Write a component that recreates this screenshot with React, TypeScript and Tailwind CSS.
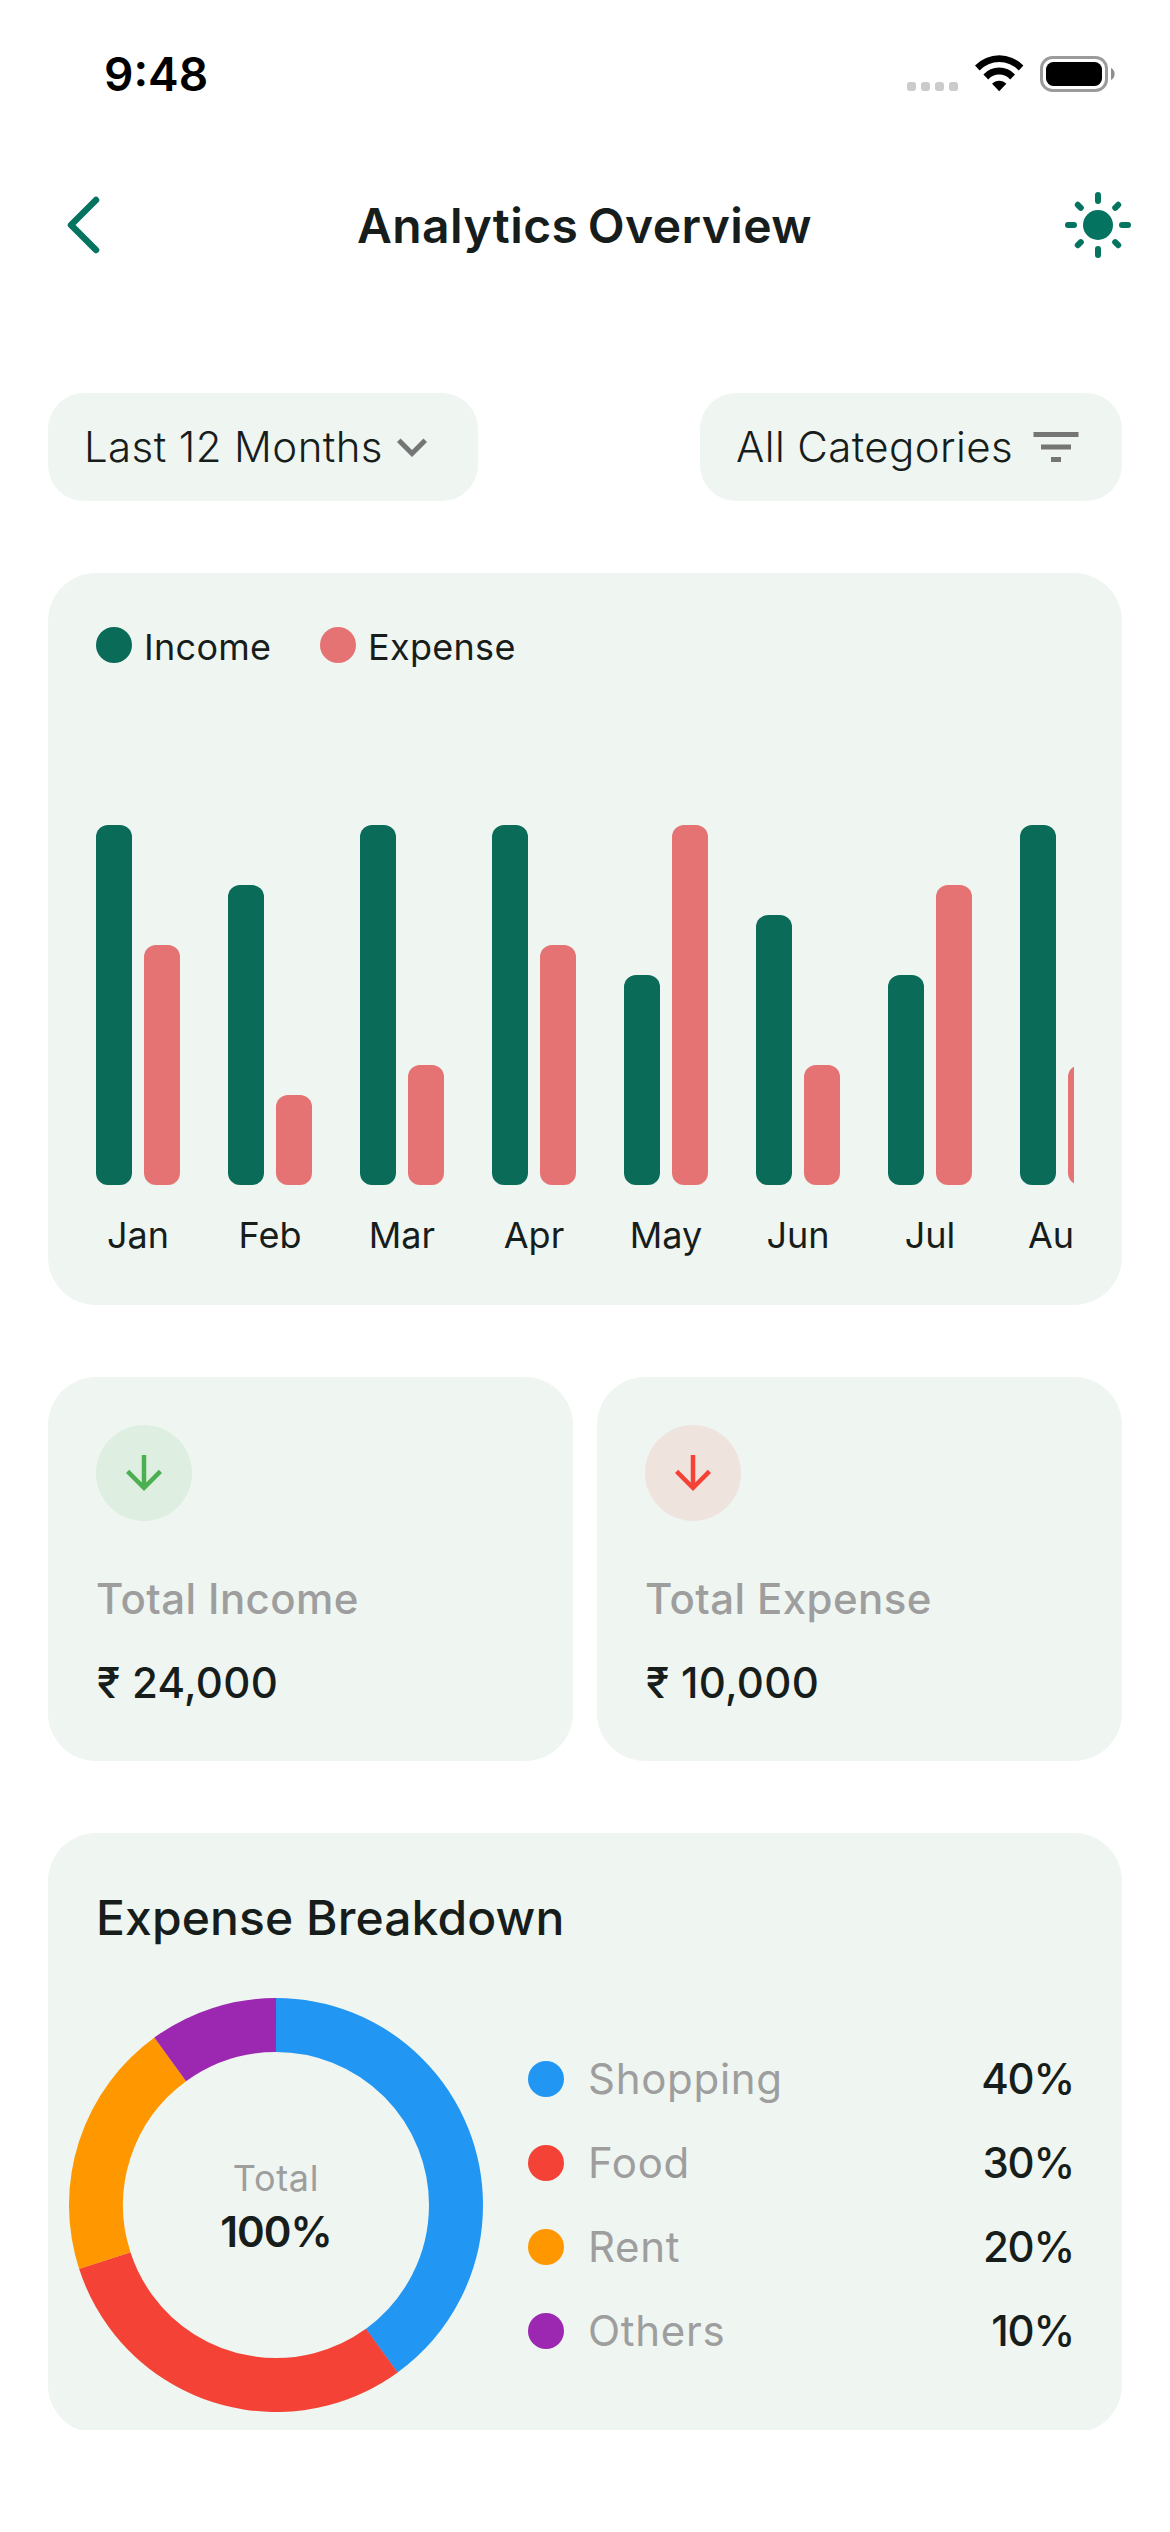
import { MdArrowDownward, MdFilterList, MdKeyboardArrowDown } from 'react-icons/md'

interface MonthData {
  label: string
  income: number
  expense: number
}

interface Category {
  name: string
  percent: number
  color: string
}

const months: MonthData[] = [
  { label: 'Jan', income: 360, expense: 240 },
  { label: 'Feb', income: 300, expense: 90 },
  { label: 'Mar', income: 360, expense: 120 },
  { label: 'Apr', income: 360, expense: 240 },
  { label: 'May', income: 210, expense: 360 },
  { label: 'Jun', income: 270, expense: 120 },
  { label: 'Jul', income: 210, expense: 300 },
  { label: 'Aug', income: 360, expense: 120 },
]

const categories: Category[] = [
  { name: 'Shopping', percent: 40, color: '#2196f3' },
  { name: 'Food', percent: 30, color: '#f44336' },
  { name: 'Rent', percent: 20, color: '#ff9800' },
  { name: 'Others', percent: 10, color: '#9c27b0' },
]

function StatusBar() {
  return (
    <div className="h-[141px] flex items-start justify-between pl-[104px] pr-[54px]">
      <span className="pt-[46px] text-[46px] leading-[56px] font-semibold text-black">9:48</span>
      <div className="flex items-start pt-[55px]">
        <div className="flex gap-[5px] pt-[27px]">
          {[0, 1, 2, 3].map((i) => (
            <span key={i} className="w-[9px] h-[9px] rounded-[3px] bg-[#cbcbcb]" />
          ))}
        </div>
        <svg className="ml-[17px]" width="49" height="37" viewBox="0 0 49 37">
          <path d="M0 10.5 A33.9 33.9 0 0 1 48.4 10.5 L43.8 15.5 A26.8 26.8 0 0 0 4.6 15.5 Z" />
          <path d="M8.4 19.4 A21.5 21.5 0 0 1 40 19.4 L35.2 24.4 A14.8 14.8 0 0 0 13.2 24.4 Z" />
          <path d="M17.1 28.8 A9.7 9.7 0 0 1 31.3 28.8 L24.2 36.2 Z" />
        </svg>
        <svg className="ml-4 mt-px" width="76" height="36" viewBox="0 0 76 36">
          <rect x="1.5" y="1.5" width="65" height="33" rx="11" fill="none" stroke="#9b9b9b" strokeWidth="3" />
          <rect x="6" y="6" width="56" height="24" rx="7.5" />
          <path d="M71 12 A6.8 6.8 0 0 1 71 24 Z" fill="#8e8e8e" />
        </svg>
      </div>
    </div>
  )
}

function AppBar() {
  return (
    <div className="h-[168px] flex items-center justify-between pl-[66px] pr-[38px]">
      <svg width="36" height="60" viewBox="0 0 36 60" fill="none" stroke="#047460" strokeWidth="6.5" strokeLinecap="round" strokeLinejoin="round">
        <path d="M30 5 L5 30 L30 55" />
      </svg>
      <h1 className="pt-[2px] pl-[3px] text-[48px] leading-[60px] font-semibold tracking-[0.4px] [word-spacing:-3px]">
        Analytics Overview
      </h1>
      <svg width="68" height="68" viewBox="-34 -34 68 68" stroke="#047460" strokeWidth="6" strokeLinecap="round">
        <circle r="15" fill="#047460" stroke="none" />
        <path d="M0 -24V-30M0 24V30M-24 0H-30M24 0H30M17.2 17.2L20.2 20.2M-17.2 17.2L-20.2 20.2M17.2 -17.2L20.2 -20.2M-17.2 -17.2L-20.2 -20.2" />
      </svg>
    </div>
  )
}

function BarChartCard() {
  return (
    <div className="h-[732px] rounded-[48px] bg-[#eff5f1] p-12">
      <div className="flex gap-12 text-[36px] leading-[52px] tracking-[0.3px]">
        <div className="flex w-[176px] gap-3">
          <span className="mt-1.5 w-9 h-9 rounded-full bg-[#096b58]" />
          <span>Income</span>
        </div>
        <div className="flex gap-3">
          <span className="mt-1.5 w-9 h-9 rounded-full bg-[#e57373]" />
          <span>Expense</span>
        </div>
      </div>
      <div className="flex gap-12 overflow-hidden">
        {months.map((m) => (
          <div key={m.label} className="w-[84px] shrink-0">
            <div className="flex h-[512px] items-end gap-3">
              <div className="w-9 rounded-[12px] bg-[#096b58]" style={{ height: m.income }} />
              <div className="w-9 rounded-[12px] bg-[#e57373]" style={{ height: m.expense }} />
            </div>
            <p className="mt-6 text-center text-[36px] leading-[52px]">{m.label}</p>
          </div>
        ))}
      </div>
    </div>
  )
}

function StatCard({ label, amount, iconClass }: { label: string; amount: string; iconClass: string }) {
  return (
    <div className="h-[384px] flex-1 rounded-[48px] bg-[#eff5f1] p-12">
      <div className={`flex h-24 w-24 items-center justify-center rounded-full ${iconClass}`}>
        <MdArrowDownward size={54} />
      </div>
      <p className="mt-[49px] text-[42px] leading-[57px] font-medium tracking-[0.4px] text-[#9e9e9e]">{label}</p>
      <p className="mt-[27px] pl-px text-[42px] leading-[57px] font-medium tracking-[0.3px]">{amount}</p>
    </div>
  )
}

function Donut() {
  // radius chosen on the middle of the ring
  const r = 180
  const length = 2 * Math.PI * r
  let start = 0
  return (
    <div className="relative -ml-[27px] h-[414px] w-[414px] shrink-0">
      <svg width="414" height="414" viewBox="-207 -207 414 414" fill="none" strokeWidth="54">
        {categories.map((c) => {
          const rotate = start * 3.6 - 90
          start += c.percent
          return (
            <circle
              key={c.name}
              r={r}
              stroke={c.color}
              strokeDasharray={`${(length * c.percent) / 100} ${length}`}
              transform={`rotate(${rotate})`}
            />
          )
        })}
      </svg>
      <div className="absolute inset-0 flex flex-col items-center justify-center pt-1">
        <span className="text-[36px] leading-[49px] tracking-[0.7px] text-[#9e9e9e]">Total</span>
        <span className="text-[42px] leading-[57px] font-semibold tracking-[-1px]">100%</span>
      </div>
    </div>
  )
}

function BreakdownCard() {
  return (
    <div className="h-[600px] shrink-0 rounded-[48px] bg-[#eff5f1] p-12">
      <h2 className="text-[48px] leading-[74px] font-medium tracking-[0.1px]">Expense Breakdown</h2>
      <div className="mt-[43px] flex items-center gap-[45px]">
        <Donut />
        <ul className="flex-1">
          {categories.map((c) => (
            <li key={c.name} className="flex h-[84px] items-center text-[42px]">
              <span className="mr-6 h-9 w-9 rounded-full" style={{ backgroundColor: c.color }} />
              <span className="pb-[2px] tracking-[0.7px] text-[#9e9e9e]">{c.name}</span>
              <span className="ml-auto pb-[2px] font-medium tracking-[-1.2px]">{c.percent}%</span>
            </li>
          ))}
        </ul>
      </div>
    </div>
  )
}

export default function App() {
  return (
    <div className="flex h-[2532px] w-[1170px] flex-col overflow-hidden bg-white font-[Inter,sans-serif] text-[#171d1b]">
      <StatusBar />
      <AppBar />
      <main className="flex h-[2121px] flex-col gap-[72px] overflow-hidden px-12 pt-[84px]">
        {/* filters */}
        <div className="flex shrink-0 justify-between text-[42px] leading-[108px] font-light tracking-[0.4px] whitespace-nowrap">
          <button className="flex h-[108px] w-[430px] items-center rounded-[36px] bg-[#eff5f1] px-9">
            <span className="w-[298px] text-left">Last 12 Months</span>
            <MdKeyboardArrowDown className="shrink-0" size={60} color="#757575" />
          </button>
          <button className="flex h-[108px] w-[422px] items-center rounded-[36px] bg-[#eff5f1] px-9">
            <span className="w-[290px] text-left">All Categories</span>
            <MdFilterList className="shrink-0" size={60} color="#757575" />
          </button>
        </div>
        <BarChartCard />
        <div className="flex shrink-0 gap-6">
          <StatCard label="Total Income" amount="₹ 24,000" iconClass="bg-[#4caf50]/10 text-[#4caf50]" />
          <StatCard label="Total Expense" amount="₹ 10,000" iconClass="bg-[#f44336]/10 text-[#f44336]" />
        </div>
        <BreakdownCard />
      </main>
    </div>
  )
}
